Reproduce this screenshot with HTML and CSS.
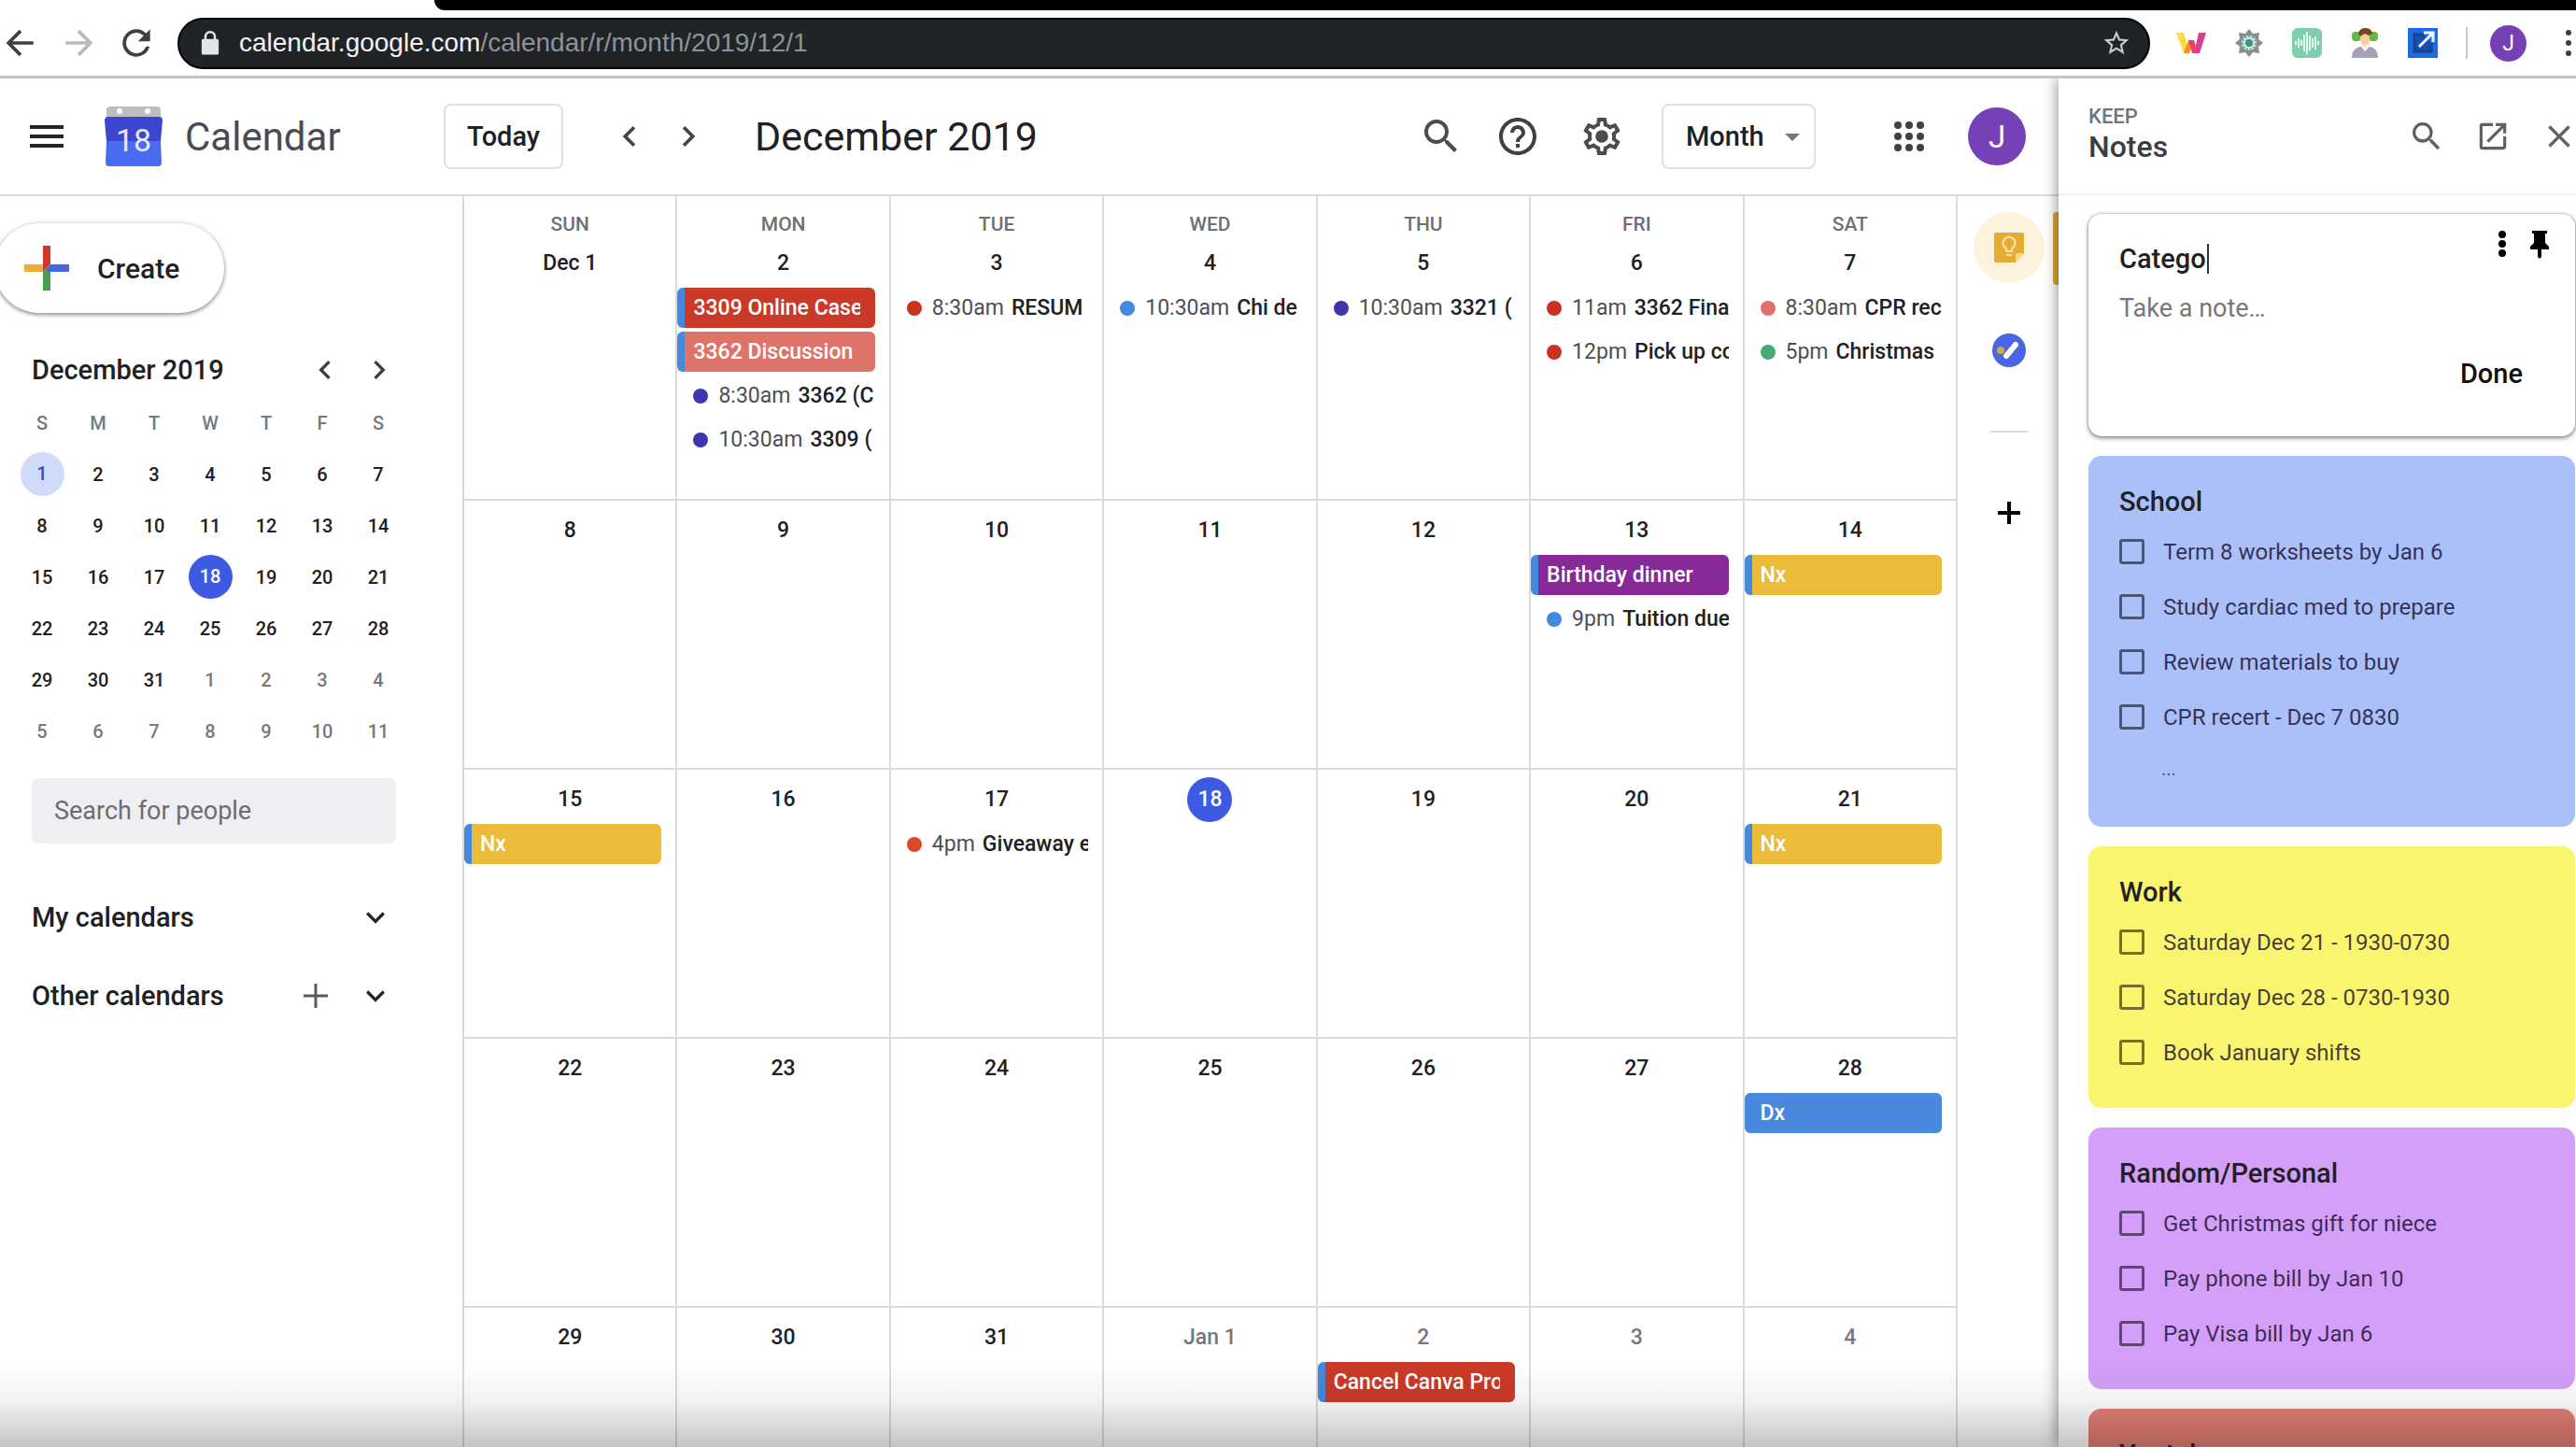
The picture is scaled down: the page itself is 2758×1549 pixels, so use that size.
FILE: index.html
```html
<!DOCTYPE html>
<html lang="en">
<head>
<meta charset="utf-8">
<title>Calendar - December 2019</title>
<link rel="stylesheet" href="styles.css">
</head>
<body>
<div class="window">
  <div class="tab-strip"></div>
  <div class="browser-bar">
    <div class="nav-buttons">
      <button class="icon-btn" aria-label="Back"><svg width="44" height="44" viewBox="0 0 24 24" fill="none" stroke="#3f4043" stroke-width="2"><path d="M19.5 12H5M12 5l-7 7 7 7"/></svg></button>
      <button class="icon-btn" aria-label="Forward"><svg width="44" height="44" viewBox="0 0 24 24" fill="none" stroke="#b9babc" stroke-width="2"><path d="M4.500 12H19M12 5l7 7-7 7"/></svg></button>
      <button class="icon-btn" aria-label="Reload"><svg width="44" height="44" viewBox="0 0 24 24" fill="#3f4043"><path d="M17.650 6.350A7.960 7.960 0 0 0 12 4a8 8 0 1 0 7.730 10h-2.080A6 6 0 1 1 12 6c1.660 0 3.140.690 4.220 1.780L13 11h7V4l-2.350 2.350z"/></svg></button>
    </div>
    <div class="omnibox">
      <svg width="30" height="30" viewBox="0 0 24 24" fill="#e3e4e7"><path d="M18 8.500h-1V6.500a5 5 0 0 0-10 0v2H6c-.8 0-1.300.6-1.300 1.400v10.600c0 .9.600 1.500 1.300 1.500h12c.8 0 1.300-.6 1.300-1.500V9.900c0-.8-.5-1.400-1.300-1.400zM9 8.500v-2a3 3 0 0 1 6 0v2z"/></svg>
      <a class="url" href="#"><span class="host">calendar.google.com</span>/calendar/r/month/2019/12/1</a>
      <button class="icon-btn star" aria-label="Bookmark"><svg width="32" height="32" viewBox="0 0 24 24" fill="#c9cacd"><path d="M22 9.240l-7.190-.620L12 2 9.190 8.630 2 9.240l5.460 4.730L5.820 21 12 17.270 18.180 21l-1.630-7.030L22 9.240zM12 15.400l-3.760 2.270 1-4.280-3.320-2.880 4.380-.380L12 6.100l1.710 4.040 4.380.380-3.320 2.880 1 4.280L12 15.400z"/></svg></button>
    </div>
    <div class="extensions">
      <svg width="32" height="32" viewBox="0 0 32 32"><path d="M0 5h8l6 22H8z" fill="#f8dc3e"/><path d="M8 27l5-14h6l-5 14z" fill="#f58a2c"/><path d="M13 13h6l4 14h-6z" fill="#e8455b"/><path d="M24 5h8l-7 22h-6z" fill="#d9408f"/></svg>
      <svg width="32" height="32" viewBox="0 0 32 32"><path d="M16 1l4 5 7-1-1 7 5 4-5 4 1 7-7-1-4 5-4-5-7 1 1-7-5-4 5-4-1-7 7 1z" fill="#8c8c8c"/><circle cx="16" cy="16" r="8" fill="#c9ece2"/><circle cx="16" cy="16" r="7" fill="none" stroke="#5fae9c" stroke-width="2" stroke-dasharray="2 2"/><circle cx="16" cy="16" r="4" fill="#458d7d"/></svg>
      <svg width="32" height="32" viewBox="0 0 32 32"><rect width="32" height="32" rx="6" fill="#7fceae"/><path d="M4 14v4M7 11v10M10 13v6M13 7v18M16 4v24M19 8v16M22 11v10M25 9v14M28 14v4" stroke="#e2fbf0" stroke-width="2"/></svg>
      <svg width="32" height="32" viewBox="0 0 32 32"><path d="M2 32c0-8 4-11 9-12h10c5 1 9 4 9 12z" fill="#a5a1bd"/><path d="M12 20l4 5 5-5v-5h-9z" fill="#fff0dc"/><rect x="2" y="4" width="10" height="10" rx="4" fill="#63b944"/><rect x="20" y="4" width="10" height="10" rx="4" fill="#63b944"/><ellipse cx="16" cy="11" rx="5" ry="8" fill="#f5cfa4"/><path d="M9 6c1-8 14-8 15 0l-4 2-4-2-5 3z" fill="#76451d"/></svg>
      <svg width="32" height="32" viewBox="0 0 32 32"><rect width="32" height="32" fill="#1c6be0"/><path d="M17 7H7v18h18V16" fill="#1a4db3" stroke="#174294" stroke-width="3"/><path d="M12 20L26 6M17 5h10v10" fill="none" stroke="#eef5ff" stroke-width="3"/></svg>
      <span class="bar-divider"></span>
      <span class="avatar small">J</span>
    </div>
    <button class="icon-btn browser-menu" aria-label="Browser menu"><svg width="8" height="32" viewBox="0 0 8 32" fill="#3c3d40"><circle cx="4" cy="5" r="3"/><circle cx="4" cy="16" r="3"/><circle cx="4" cy="27" r="3"/></svg></button>
  </div>

  <div class="app">
    <div class="calendar-app">
      <header class="app-header">
        <div class="brand">
          <button class="icon-btn" aria-label="Main menu"><svg width="48" height="48" viewBox="0 0 24 24" fill="#242528"><path d="M3 18h18v-2H3v2zm0-5h18v-2H3v2zm0-7v2h18V6H3z"/></svg></button>
          <div class="logo">
            <svg width="62" height="64" viewBox="0 0 62 64"><path d="M6 0h50q4 0 4 4v10H2V4q0-4 4-4z" fill="#bdbdc2"/><circle cx="16" cy="5" r="3" fill="#fff"/><circle cx="46" cy="5" r="3" fill="#fff"/><path d="M4 11h54q4 0 4 4l-2 22H2L0 15q0-4 4-4z" fill="#3b45cf"/><path d="M2 37h58l1 23q0 4-4 4H5q-4 0-4-4z" fill="#4a6cf0"/></svg>
            <span class="logo-day">18</span>
          </div>
          <span class="brand-name">Calendar</span>
        </div>
        <button class="today-btn">Today</button>
        <div class="period-nav">
          <button class="icon-btn" aria-label="Previous month"><svg width="48" height="44" viewBox="0 0 24 24" fill="#444549"><path d="M15.410 7.410L14 6l-6 6 6 6 1.410-1.410L10.830 12z"/></svg></button>
          <button class="icon-btn" aria-label="Next month"><svg width="48" height="44" viewBox="0 0 24 24" fill="#444549"><path d="M10 6L8.590 7.410 13.170 12l-4.580 4.590L10 18l6-6z"/></svg></button>
        </div>
        <h1 class="period">December 2019</h1>
        <div class="header-tools">
          <button class="icon-btn" aria-label="Search"><svg width="48" height="48" viewBox="0 0 24 24" fill="#4b4c50"><path d="M15.500 14h-.790l-.280-.270A6.470 6.470 0 0 0 16 9.500 6.500 6.500 0 1 0 9.500 16c1.610 0 3.090-.590 4.230-1.570l.270.280v.790l5 4.990L20.490 19l-4.990-5zm-6 0C7.010 14 5 11.990 5 9.500S7.010 5 9.500 5 14 7.010 14 9.500 11.990 14 9.500 14z"/></svg></button>
          <button class="icon-btn" aria-label="Help"><svg width="48" height="48" viewBox="0 0 24 24" fill="#3f4044"><path d="M11 18h2v-2h-2v2zm1-16C6.480 2 2 6.480 2 12s4.480 10 10 10 10-4.480 10-10S17.520 2 12 2zm0 18c-4.410 0-8-3.590-8-8s3.590-8 8-8 8 3.590 8 8-3.590 8-8 8zm0-14c-2.210 0-4 1.790-4 4h2c0-1.100.9-2 2-2s2 .9 2 2c0 2-3 1.750-3 5h2c0-2.250 3-2.500 3-5 0-2.210-1.790-4-4-4z"/></svg></button>
          <button class="icon-btn settings" aria-label="Settings"><svg width="48" height="48" viewBox="0 0 24 24" fill="#4b4c50"><path d="M19.430 12.980c.040-.320.070-.640.070-.980s-.030-.660-.070-.980l2.110-1.650c.190-.150.240-.420.120-.640l-2-3.460a.5.500 0 0 0-.610-.220l-2.490 1c-.520-.4-1.080-.730-1.690-.980l-.380-2.650A.488.488 0 0 0 14 2h-4c-.250 0-.460.180-.490.420l-.380 2.650c-.610.250-1.170.590-1.690.980l-2.490-1a.5.500 0 0 0-.610.220l-2 3.460c-.130.220-.070.490.120.640l2.110 1.650c-.040.320-.070.650-.070.980s.030.660.070.980l-2.110 1.650c-.190.150-.240.420-.120.640l2 3.460c.120.220.390.300.610.220l2.490-1c.520.4 1.080.730 1.690.980l.380 2.650c.030.240.240.420.490.420h4c.250 0 .460-.180.490-.420l.380-2.650c.610-.250 1.170-.590 1.690-.980l2.490 1c.230.090.490 0 .610-.220l2-3.460c.120-.220.070-.490-.120-.640l-2.110-1.650zm-1.980-1.710c.040.310.050.520.050.730s-.020.430-.050.730l-.140 1.130.890.700 1.080.840-.7 1.210-1.270-.510-1.040-.420-.9.680c-.430.320-.840.560-1.250.730l-1.060.430-.160 1.130-.2 1.350h-1.400l-.190-1.350-.160-1.130-1.060-.430c-.430-.180-.830-.410-1.230-.710l-.910-.7-1.060.430-1.270.510-.7-1.210 1.080-.840.890-.7-.140-1.130c-.030-.310-.050-.540-.050-.740s.020-.430.050-.730l.140-1.130-.890-.7-1.080-.840.7-1.210 1.270.510 1.040.420.9-.680c.430-.320.840-.560 1.250-.730l1.060-.430.160-1.130.2-1.350h1.390l.190 1.350.160 1.130 1.060.430c.430.180.830.410 1.230.710l.910.7 1.060-.430 1.270-.510.7 1.210-1.070.850-.890.700.140 1.130z"/><circle cx="12" cy="12" r="3.400"/></svg></button>
          <span class="view-select"><select aria-label="View"><option>Month</option><option>Week</option><option>Day</option></select></span>
          <button class="icon-btn" aria-label="Google apps"><svg width="48" height="48" viewBox="0 0 24 24" fill="#3f4044"><circle cx="6" cy="6" r="2"/><circle cx="12" cy="6" r="2"/><circle cx="18" cy="6" r="2"/><circle cx="6" cy="12" r="2"/><circle cx="12" cy="12" r="2"/><circle cx="18" cy="12" r="2"/><circle cx="6" cy="18" r="2"/><circle cx="12" cy="18" r="2"/><circle cx="18" cy="18" r="2"/></svg></button>
          <span class="avatar account">J</span>
        </div>
      </header>

      <div class="workspace">
        <aside class="sidebar">
          <button class="create-btn"><svg width="48" height="48" viewBox="0 0 48 48"><path d="M20 0h8v20l-8 8z" fill="#d03a25"/><path d="M0 20h20v8H0z" fill="#e9ae38"/><path d="M20 28l4-4h4v24h-8z" fill="#44a04c"/><path d="M24 24l4-4h20v8H24z" fill="#4468e0"/></svg>Create</button>
          <div class="mini-head">
            <h2>December 2019</h2>
            <div class="mini-nav">
              <button class="icon-btn" aria-label="Previous"><svg width="40" height="40" viewBox="0 0 24 24" fill="#3c3d40"><path d="M15.410 7.410L14 6l-6 6 6 6 1.410-1.410L10.830 12z"/></svg></button>
              <button class="icon-btn" aria-label="Next"><svg width="40" height="40" viewBox="0 0 24 24" fill="#3c3d40"><path d="M10 6L8.590 7.410 13.170 12l-4.580 4.590L10 18l6-6z"/></svg></button>
            </div>
          </div>
          <table class="mini-cal">
            <thead><tr><th>S</th><th>M</th><th>T</th><th>W</th><th>T</th><th>F</th><th>S</th></tr></thead>
            <tbody>
              <tr><td><span class="picked">1</span></td><td>2</td><td>3</td><td>4</td><td>5</td><td>6</td><td>7</td></tr>
              <tr><td>8</td><td>9</td><td>10</td><td>11</td><td>12</td><td>13</td><td>14</td></tr>
              <tr><td>15</td><td>16</td><td>17</td><td><span class="today">18</span></td><td>19</td><td>20</td><td>21</td></tr>
              <tr><td>22</td><td>23</td><td>24</td><td>25</td><td>26</td><td>27</td><td>28</td></tr>
              <tr><td>29</td><td>30</td><td>31</td><td class="out">1</td><td class="out">2</td><td class="out">3</td><td class="out">4</td></tr>
              <tr><td class="out">5</td><td class="out">6</td><td class="out">7</td><td class="out">8</td><td class="out">9</td><td class="out">10</td><td class="out">11</td></tr>
            </tbody>
          </table>
          <input class="people-search" type="text" placeholder="Search for people" aria-label="Search for people">
          <div class="cal-list">
            <span>My calendars</span>
            <button class="icon-btn" aria-label="Expand my calendars"><svg width="40" height="40" viewBox="0 0 24 24" fill="#242528"><path d="M16.590 8.590L12 13.170 7.410 8.590 6 10l6 6 6-6z"/></svg></button>
          </div>
          <div class="cal-list">
            <span>Other calendars</span>
            <button class="icon-btn add" aria-label="Add calendar"><svg width="28" height="28" viewBox="0 0 28 28" stroke="#5a5b5f" stroke-width="3"><path d="M14 1v26M1 14h26"/></svg></button>
            <button class="icon-btn" aria-label="Expand other calendars"><svg width="40" height="40" viewBox="0 0 24 24" fill="#242528"><path d="M16.590 8.590L12 13.170 7.410 8.590 6 10l6 6 6-6z"/></svg></button>
          </div>
        </aside>

        <main class="month">
          <table class="month-grid">
            <thead><tr><th>SUN</th><th>MON</th><th>TUE</th><th>WED</th><th>THU</th><th>FRI</th><th>SAT</th></tr></thead>
            <tbody>
              <tr>
                <td><div class="day">Dec 1</div></td>
                <td><div class="day">2</div>
                  <div class="chip red">3309 Online Case</div>
                  <div class="chip salmon">3362 Discussion</div>
                  <div class="timed indigo"><time>8:30am</time> <b>3362 (C</b></div>
                  <div class="timed indigo"><time>10:30am</time> <b>3309 (</b></div></td>
                <td><div class="day">3</div><div class="timed crimson"><time>8:30am</time> <b>RESUM</b></div></td>
                <td><div class="day">4</div><div class="timed blue"><time>10:30am</time> <b>Chi de</b></div></td>
                <td><div class="day">5</div><div class="timed indigo"><time>10:30am</time> <b>3321 (</b></div></td>
                <td><div class="day">6</div><div class="timed crimson"><time>11am</time> <b>3362 Fina</b></div><div class="timed crimson"><time>12pm</time> <b>Pick up co</b></div></td>
                <td><div class="day">7</div><div class="timed salmon"><time>8:30am</time> <b>CPR rec</b></div><div class="timed green"><time>5pm</time> <b>Christmas</b></div></td>
              </tr>
              <tr>
                <td><div class="day">8</div></td><td><div class="day">9</div></td><td><div class="day">10</div></td><td><div class="day">11</div></td><td><div class="day">12</div></td>
                <td><div class="day">13</div><div class="chip purple">Birthday dinner</div><div class="timed blue"><time>9pm</time> <b>Tuition due</b></div></td>
                <td><div class="day">14</div><div class="chip amber">Nx</div></td>
              </tr>
              <tr>
                <td><div class="day">15</div><div class="chip amber">Nx</div></td><td><div class="day">16</div></td>
                <td><div class="day">17</div><div class="timed orange"><time>4pm</time> <b>Giveaway e</b></div></td>
                <td><div class="day"><span class="today">18</span></div></td><td><div class="day">19</div></td><td><div class="day">20</div></td>
                <td><div class="day">21</div><div class="chip amber">Nx</div></td>
              </tr>
              <tr>
                <td><div class="day">22</div></td><td><div class="day">23</div></td><td><div class="day">24</div></td><td><div class="day">25</div></td><td><div class="day">26</div></td><td><div class="day">27</div></td>
                <td><div class="day">28</div><div class="chip blue">Dx</div></td>
              </tr>
              <tr>
                <td><div class="day">29</div></td><td><div class="day">30</div></td><td><div class="day">31</div></td><td class="out"><div class="day">Jan 1</div></td>
                <td class="out"><div class="day">2</div><div class="chip red">Cancel Canva Pro</div></td>
                <td class="out"><div class="day">3</div></td><td class="out"><div class="day">4</div></td>
              </tr>
            </tbody>
          </table>
        </main>

        <nav class="rail" aria-label="Side panel apps">
          <button class="rail-btn keep-active" aria-label="Keep"><svg width="34" height="34" viewBox="0 0 34 34"><path d="M3 1h28q2 0 2 2v20l-9 10H3q-2 0-2-2V3q0-2 2-2z" fill="#e3ac33"/><path d="M33 23l-9 10V25q0-2 2-2z" fill="#f6d984"/><path d="M14 21v-3a6.500 6.500 0 1 1 6 0v3zM14 25h6" fill="none" stroke="#fbe5ab" stroke-width="2"/></svg></button>
          <button class="rail-btn" aria-label="Tasks"><svg width="38" height="38" viewBox="0 0 38 38"><circle cx="19" cy="19" r="18" fill="#4966e4"/><path d="M16 25L26 13" stroke="#fff" stroke-width="6" stroke-linecap="round"/><circle cx="10" cy="19" r="4" fill="#d0ab45"/></svg></button>
          <hr>
          <button class="rail-btn" aria-label="Get add-ons"><svg width="24" height="24" viewBox="0 0 24 24" stroke="#000" stroke-width="4"><path d="M12 0v24M0 12h24"/></svg></button>
        </nav>
      </div>
    </div>

    <aside class="keep">
      <header class="keep-header">
        <div class="keep-titles"><div class="keep-app">KEEP</div><h2>Notes</h2></div>
        <button class="icon-btn" aria-label="Search notes"><svg width="40" height="40" viewBox="0 0 24 24" fill="#5f6064"><path d="M15.500 14h-.790l-.280-.270A6.470 6.470 0 0 0 16 9.500 6.500 6.500 0 1 0 9.500 16c1.610 0 3.090-.590 4.230-1.570l.270.280v.790l5 4.990L20.490 19l-4.990-5zm-6 0C7.010 14 5 11.990 5 9.500S7.010 5 9.500 5 14 7.010 14 9.500 11.990 14 9.500 14z"/></svg></button>
        <button class="icon-btn" aria-label="Open in new tab"><svg width="38" height="38" viewBox="0 0 24 24" fill="#5f6064"><path d="M19 19H5V5h7V3H5a2 2 0 0 0-2 2v14a2 2 0 0 0 2 2h14c1.100 0 2-.9 2-2v-7h-2v7zM14 3v2h3.590l-9.830 9.830 1.410 1.410L19 6.410V10h2V3h-7z"/></svg></button>
        <button class="icon-btn" aria-label="Close"><svg width="40" height="40" viewBox="0 0 24 24" fill="#5f6064"><path d="M19 6.410L17.590 5 12 10.590 6.410 5 5 6.410 10.590 12 5 17.590 6.410 19 12 13.410 17.590 19 19 17.590 13.410 12z"/></svg></button>
      </header>
      <div class="notes">
        <section class="note editor">
          <div class="editor-top">
            <input class="note-name" type="text" size="6" value="Catego" aria-label="Title"><span class="caret"></span>
            <button class="icon-btn more" aria-label="More"><svg width="8" height="28" viewBox="0 0 8 28"><circle cx="4" cy="4" r="4"/><circle cx="4" cy="14" r="4"/><circle cx="4" cy="24" r="4"/></svg></button>
            <button class="icon-btn" aria-label="Pin note"><svg width="20" height="30" viewBox="0 0 20 30"><path d="M2 0h16v3h-2v10l4 4v3h-8v8l-2 2-2-2v-8H0v-3l4-4V3H2z"/></svg></button>
          </div>
          <textarea class="note-body" rows="1" placeholder="Take a note…" aria-label="Note"></textarea>
          <button class="done-btn">Done</button>
        </section>
        <section class="note periwinkle">
          <h3>School</h3>
          <label><input type="checkbox">Term 8 worksheets by Jan 6</label>
          <label><input type="checkbox">Study cardiac med to prepare</label>
          <label><input type="checkbox">Review materials to buy</label>
          <label><input type="checkbox">CPR recert - Dec 7 0830</label>
          <div class="ellipsis">...</div>
        </section>
        <section class="note yellow">
          <h3>Work</h3>
          <label><input type="checkbox">Saturday Dec 21 - 1930-0730</label>
          <label><input type="checkbox">Saturday Dec 28 - 0730-1930</label>
          <label><input type="checkbox">Book January shifts</label>
        </section>
        <section class="note violet">
          <h3>Random/Personal</h3>
          <label><input type="checkbox">Get Christmas gift for niece</label>
          <label><input type="checkbox">Pay phone bill by Jan 10</label>
          <label><input type="checkbox">Pay Visa bill by Jan 6</label>
        </section>
        <section class="note coral">
          <h3>Youtube</h3>
        </section>
      </div>
    </aside>
  </div>
  <div class="bottom-shade"></div>
</div>
</body>
</html>
```
FILE: styles.css
```css
* { box-sizing: border-box; }
body { margin: 0; font-family: Roboto, "Liberation Sans", sans-serif; color: #202124; background: #fff; }
button, input, select, textarea { font: inherit; color: inherit; }
button { cursor: pointer; }
h1, h2, h3 { margin: 0; font-weight: 500; }
svg { display: block; flex: none; }

.window { position: relative; height: 100vh; overflow: hidden; display: flex; flex-direction: column; }
.icon-btn { display: flex; flex: none; padding: 0; border: 0; background: none; }

/* Browser chrome */
.tab-strip { flex: none; height: 11px; margin-left: 465px; background: #000; border-bottom-left-radius: 11px; }
.browser-bar { flex: none; display: flex; align-items: center; height: 73px; padding-right: 4px; border-bottom: 3px solid #c4c4c4; }
.nav-buttons { display: flex; gap: 18px; width: 190px; }
.omnibox { flex: 1; display: flex; align-items: center; gap: 16px; height: 55px; padding: 0 18px; border-radius: 28px; border: 2px solid #000; background: #212427; }
.url { flex: 1; font-family: "Liberation Sans", sans-serif; font-size: 28px; color: #8f9296; text-decoration: none; }
.host { color: #f1f2f4; }
.extensions { display: flex; align-items: center; gap: 30px; margin-left: 28px; }
.bar-divider { width: 2px; height: 34px; background: #c8c8ca; margin-right: -6px; }
.avatar { display: flex; flex: none; align-items: center; justify-content: center; width: 62px; height: 62px; border-radius: 50%; background: #7640b6; color: #fff; font-size: 33px; }
.avatar.small { width: 39px; height: 39px; font-size: 23px; }
.browser-menu { margin-left: 41px; }

/* Application frame */
.app { flex: 1; min-height: 0; display: flex; }
.calendar-app { flex: 1; min-width: 0; display: flex; flex-direction: column; }
.app-header { flex: none; display: flex; align-items: center; height: 126px; padding-right: 35px; border-bottom: 2px solid #dadbdd; }
.brand { display: flex; align-items: center; width: 475px; padding-left: 26px; }
.logo { position: relative; margin: 0 24px 0 38px; }
.logo-day { position: absolute; inset: 12px 0 0; text-align: center; font-size: 34px; line-height: 48px; color: #e6eaff; }
.brand-name { font-size: 42px; color: #4a4b50; }
.today-btn { width: 128px; height: 70px; padding: 0; border: 2px solid #dfe0e2; border-radius: 8px; background: #fff; font-size: 29px; font-weight: 500; }
.period-nav { display: flex; gap: 15px; margin: 0 47px; }
.period { font-size: 43px; font-weight: 400; white-space: nowrap; }
.header-tools { display: flex; align-items: center; gap: 34px; margin-left: auto; }
.settings { margin: 0 6px 0 8px; }
.account { margin-left: 5px; }
.view-select { position: relative; margin-right: 42px; }
.view-select::after { content: ""; position: absolute; right: 17px; top: 32px; border: 8px solid transparent; border-top-color: #77787b; border-bottom: 0; pointer-events: none; }
.view-select select { appearance: none; width: 165px; height: 70px; padding: 0 24px; border: 2px solid #dfe0e2; border-radius: 8px; background: #fff; font-size: 29px; font-weight: 500; }

.workspace { flex: 1; min-height: 0; display: flex; }

/* Sidebar */
.sidebar { flex: none; width: 495px; padding: 29px 71px 0 34px; }
.create-btn { display: flex; align-items: center; gap: 30px; width: 246px; height: 96px; margin-left: -40px; padding: 0 0 0 32px; border: 0; border-radius: 48px; background: #fff; font-size: 30px; font-weight: 500; box-shadow: 0 2px 4px rgba(0,0,0,.4), 0 0 6px rgba(0,0,0,.12); }
.mini-head { display: flex; justify-content: space-between; align-items: center; height: 40px; margin-top: 41px; }
.mini-head h2 { font-size: 29px; }
.mini-nav { display: flex; gap: 18px; margin-right: -2px; }
.mini-cal { width: 420px; margin: 10px 0 0 -19px; border-collapse: collapse; table-layout: fixed; text-align: center; font-size: 20px; font-weight: 500; }
.mini-cal th, .mini-cal td { height: 55px; padding: 0; }
.mini-cal th { height: 54px; font-weight: 500; color: #77787b; }
.mini-cal span { display: inline-block; width: 47px; height: 47px; border-radius: 50%; line-height: 47px; }
.picked { background: #d0dafa; color: #3350b8; }
.mini-cal .out { color: #77787b; }
.today { background: #3e5ae2; color: #fff; }
.people-search { display: block; width: 100%; height: 70px; margin-top: 23px; padding: 0 24px; border: 0; border-radius: 8px; background: #efeff3; font-size: 27px; }
.people-search::placeholder { color: #6c6d72; opacity: 1; }
.cal-list { display: flex; align-items: center; height: 84px; font-size: 29px; font-weight: 500; margin-right: 2px; }
.people-search + .cal-list { margin-top: 37px; }
.cal-list span { flex: 1; }
.add { margin-right: 30px; }

/* Month view */
.month { flex: 1; min-width: 0; overflow: hidden; }
.month-grid { width: 100%; border-collapse: collapse; table-layout: fixed; }
.month-grid th { height: 40px; padding: 20px 0 0; border-left: 2px solid #dadbdd; font-size: 21px; line-height: 20px; font-weight: 500; color: #6f7074; }
.month-grid td { height: 288px; padding: 0 15px 0 0; border-left: 2px solid #dadbdd; border-bottom: 2px solid #dadbdd; vertical-align: top; }
.month-grid tbody tr:first-child td { height: 285px; }
.month-grid th:last-child, .month-grid td:last-child { border-right: 2px solid #dadbdd; }
.day { height: 48px; margin: 8px -15px 2px 0; text-align: center; font-size: 23px; line-height: 48px; font-weight: 500; }
.day .today { display: inline-block; width: 48px; border-radius: 50%; }
.out .day { color: #77787b; }
.chip, .timed { height: 43px; margin-bottom: 4px; overflow: hidden; white-space: nowrap; font-size: 23px; line-height: 43px; }
.chip { padding-left: 9px; border-left: 8px solid #4489dc; border-right: 16px solid; border-radius: 6px; font-weight: 500; color: #fff; }
.timed { display: flex; align-items: center; gap: 8px; padding-left: 17px; color: #55565a; }
.timed::before { content: ""; flex: none; width: 16px; height: 16px; margin-right: 3px; border-radius: 50%; background: currentColor; }
.timed time { color: #4e4f54; }
.timed b { font-weight: 500; color: #202124; }
.chip.red { background: #cb3a28; border-right-color: #cb3a28; }
.chip.salmon { background: #de7469; border-right-color: #de7469; }
.chip.purple { background: #872999; border-right-color: #872999; }
.chip.amber { background: #ebbb39; border-right-color: #ebbb39; }
.chip.blue { background: #4889df; border-right-color: #4889df; }
.timed.indigo { color: #4035ab; }
.timed.crimson { color: #cb3222; }
.timed.orange { color: #dc4a2c; }
.timed.salmon { color: #de7069; }
.timed.green { color: #46ab74; }
.timed.blue { color: #4489e0; }

/* App rail */
.rail { flex: none; display: flex; flex-direction: column; align-items: center; width: 108px; padding: 17px 0 0 2px; }
.rail-btn { display: flex; align-items: center; justify-content: center; width: 76px; height: 76px; padding: 0; border: 0; border-radius: 50%; background: none; }
.rail-btn + .rail-btn { margin-top: 34px; }
.keep-active { background: #fdf3dc; }
.keep-active::after { content: ""; position: absolute; left: calc(100% - 560px); top: 227px; width: 6px; height: 78px; border-radius: 4px 0 0 4px; background: #d9ab35; }
.rail hr { width: 40px; height: 2px; margin: 48px 0; border: 0; background: #dadbdd; }

/* Keep panel */
.keep { flex: none; width: 554px; background: #fff; box-shadow: -2px 0 14px rgba(0,0,0,.4); clip-path: inset(0 0 0 -30px); }
.keep-header { display: flex; align-items: center; gap: 32px; height: 125px; margin-right: -2px; padding: 0 0 0 32px; border-bottom: 2px solid #efeff0; }
.keep-titles { flex: 1; padding-bottom: 4px; }
.keep-app { font-size: 22px; line-height: 26px; font-weight: 500; color: #737478; }
.keep-titles h2 { font-size: 32px; line-height: 38px; color: #3c3d42; }
.notes { display: flex; flex-direction: column; gap: 21px; padding: 20px 1px 0 32px; }
.note { padding: 32px 33px 30px; border-radius: 14px; }
.note h3 { margin-bottom: 7px; font-size: 29px; line-height: 34px; }
.note label { display: flex; align-items: center; gap: 20px; height: 59px; font-size: 24px; color: rgba(20,10,40,.8); }
.note input[type="checkbox"] { appearance: none; flex: none; width: 27px; height: 27px; margin: 0; border: 3px solid rgba(0,0,0,.55); border-radius: 3px; }
.ellipsis { height: 58px; padding-left: 45px; font-size: 20px; line-height: 52px; color: rgba(20,10,40,.6); }
.periwinkle { background: #abbff8; }
.yellow { background: #faf56f; }
.violet { background: #d39ff9; }
.coral { background: #e57f76; }
.note.editor { display: flex; flex-direction: column; height: 238px; padding: 0 28px 0 33px; box-shadow: 0 2px 5px rgba(0,0,0,.45), 0 0 3px rgba(0,0,0,.3); }
.editor-top { display: flex; align-items: flex-start; gap: 26px; padding-top: 18px; }
.note-name { field-sizing: content; height: 32px; margin: 14px 0 0; padding: 0; border: 0; background: none; font-size: 29px; font-weight: 500; }
.caret { width: 2px; height: 32px; margin: 14px 0 0 -25px; background: #333; }
.more { margin-left: auto; }
.note-body { height: 36px; margin-top: 19px; padding: 0; border: 0; background: none; resize: none; overflow: hidden; font-size: 27px; line-height: 36px; }
.note-body::placeholder { color: #77787b; opacity: 1; }
.done-btn { align-self: flex-end; margin: 34px 28px 0 0; padding: 0; border: 0; background: none; font-size: 29px; line-height: 36px; font-weight: 500; color: #111; }

.bottom-shade { position: absolute; left: 0; right: 0; bottom: 0; height: 90px; pointer-events: none; background: linear-gradient(to bottom, rgba(0,0,0,0), rgba(0,0,0,.05) 45%, rgba(0,0,0,.23)); }
```
